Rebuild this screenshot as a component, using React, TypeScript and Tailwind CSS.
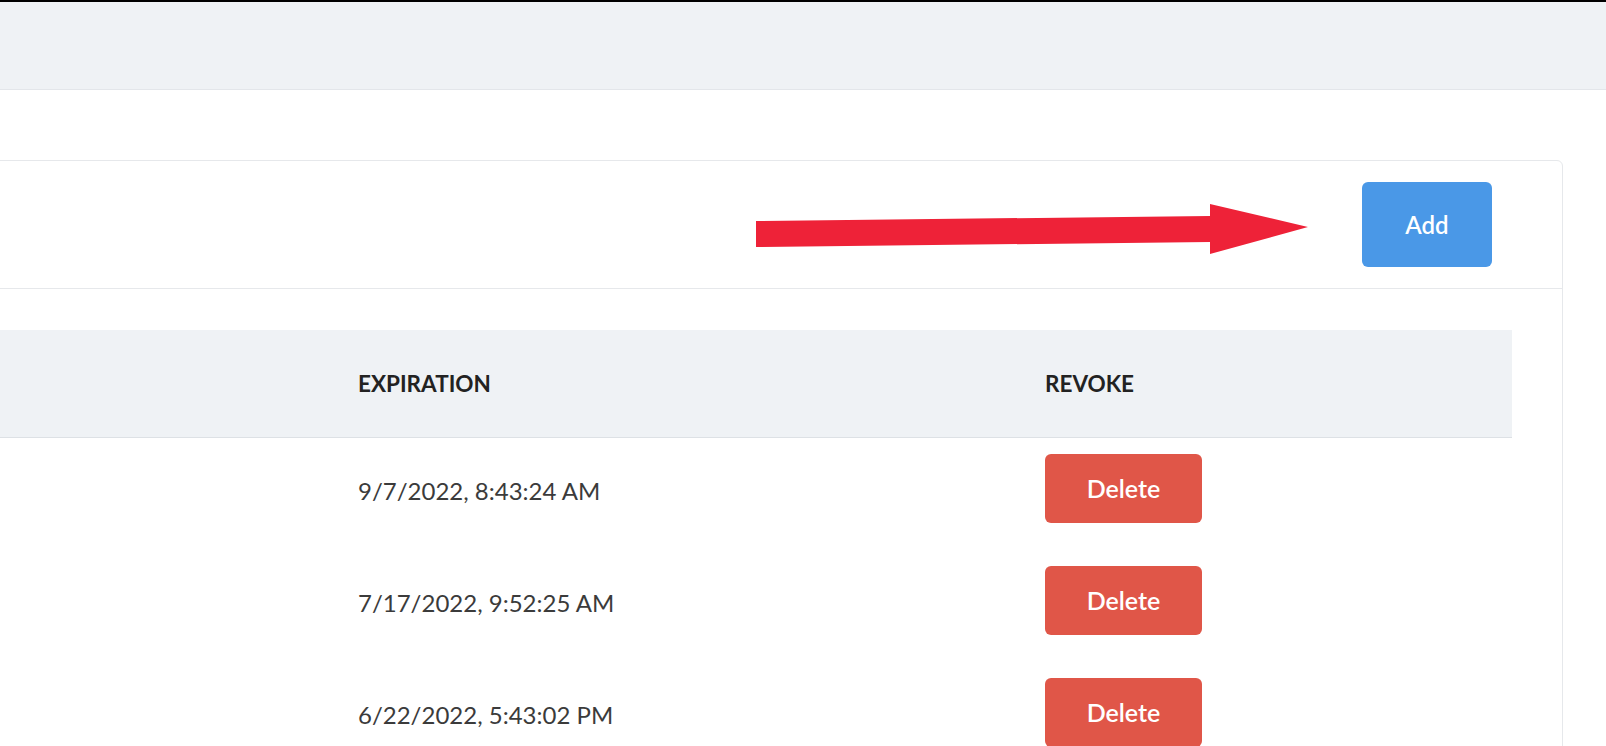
const tokens = [
  { id: 1, expiration: "9/7/2022, 8:43:24 AM" },
  { id: 2, expiration: "7/17/2022, 9:52:25 AM" },
  { id: 3, expiration: "6/22/2022, 5:43:02 PM" },
];

function ArrowHint() {
  return (
    <svg
      className="mr-[50px] h-[126px] w-[556px] shrink-0"
      viewBox="0 0 556 126"
      aria-hidden="true"
    >
      <polygon
        points="0,59 454,54 454,42 552,65 454,92 454,80 0,85"
        fill="#ee2238"
      />
    </svg>
  );
}

export default function App() {
  return (
    <div
      className="min-h-[746px] w-full overflow-hidden bg-white text-[#363636]"
      style={{ fontFamily: "Lato, 'Open Sans', sans-serif" }}
    >
      <div className="h-[2px] bg-black" />
      <div className="h-[88px] border-b border-[#e3e6ea] bg-[#eff2f5]" />

      <div className="pt-[70px]">
        <div className="-ml-[40px] w-[1603px] rounded-[6px] border border-[#e6e8eb]">
          <div className="flex h-[128px] items-center justify-end border-b border-[#e6e8eb] pr-[70px]">
            <ArrowHint />
            <button
              type="button"
              className="h-[85px] w-[130px] rounded-[6px] bg-[#4a98e7] text-[24px] font-semibold text-white"
            >
              Add
            </button>
          </div>

          <div className="pl-[10px] pr-[50px] pt-[41px] pb-10">
            <div className="grid h-[108px] grid-cols-[387px_687px_1fr] items-center border-b border-[#dde1e5] bg-[#eff2f5] text-[22.5px] font-bold uppercase text-[#222]">
              <div />
              <div>Expiration</div>
              <div>Revoke</div>
            </div>

            {tokens.map((token) => (
              <div
                key={token.id}
                className="grid h-[112px] grid-cols-[387px_687px_1fr] items-start pt-[16px]"
              >
                <div />
                <div className="flex h-[69px] items-center pt-[4px] text-[24px] text-[#3b3b3b]">
                  {token.expiration}
                </div>
                <div>
                  <button
                    type="button"
                    className="h-[69px] w-[157px] rounded-[6px] bg-[#e05648] text-[25px] font-semibold text-white"
                  >
                    Delete
                  </button>
                </div>
              </div>
            ))}
          </div>
        </div>
      </div>
    </div>
  );
}
